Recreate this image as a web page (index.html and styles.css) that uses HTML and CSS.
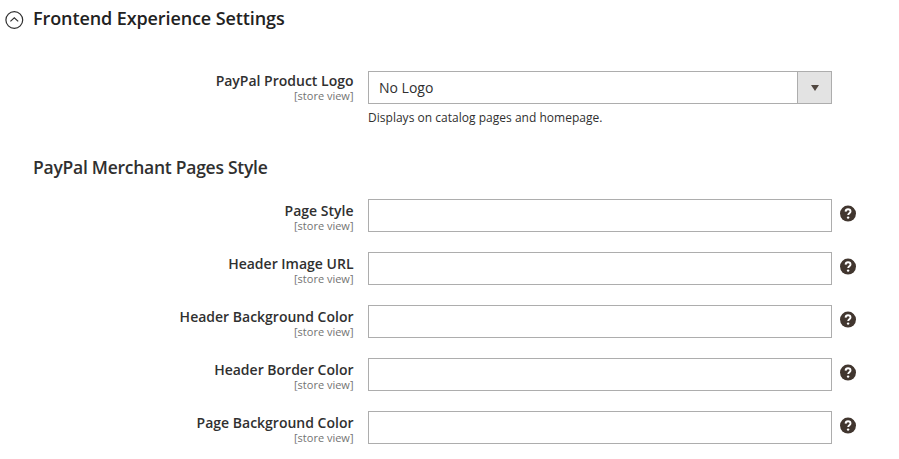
FILE: index.html
```html
<!DOCTYPE html>
<html lang="en"><head><meta charset="utf-8"><title>Frontend Experience Settings</title><link rel="stylesheet" href="styles.css"></head>
<body>
<svg width="0" height="0" class="defs"><symbol id="help" viewBox="0 0 16 16"><circle cx="8" cy="7.6" r="8" fill="#41362f"/><path d="M5.6 5.6C5.7 4 6.6 3.2 8 3.2s2.5.9 2.5 2.2c0 1.8-2.3 1.9-2.3 3.7" fill="none" stroke="#fff" stroke-width="1.9"/><circle cx="8.1" cy="11.6" r="1.2" fill="#fff"/></symbol></svg>
<main class="settings">
<header class="section-head"><svg class="toggle" viewBox="0 0 19 18"><circle cx="9.3" cy="9" r="8.4"/><path d="M5.4 10.4 9.3 6.9l3.9 3.5"/></svg><h1>Frontend Experience Settings</h1></header>
<div class="field logo"><div class="label"><label>PayPal Product Logo</label><span>[store view]</span></div><div class="control"><div class="select"><span>No Logo</span><i></i></div><p>Displays on catalog pages and homepage.</p></div></div>
<h2>PayPal Merchant Pages Style</h2>
<div class="fields">
<div class="field"><div class="label"><label>Page Style</label><span>[store view]</span></div><input><svg class="help"><use href="#help"/></svg></div>
<div class="field"><div class="label"><label>Header Image URL</label><span>[store view]</span></div><input><svg class="help"><use href="#help"/></svg></div>
<div class="field"><div class="label"><label>Header Background Color</label><span>[store view]</span></div><input><svg class="help"><use href="#help"/></svg></div>
<div class="field"><div class="label"><label>Header Border Color</label><span>[store view]</span></div><input><svg class="help"><use href="#help"/></svg></div>
<div class="field"><div class="label"><label>Page Background Color</label><span>[store view]</span></div><input><svg class="help"><use href="#help"/></svg></div>
</div>
</main></body></html>
```
FILE: styles.css
```css
* { box-sizing: border-box; }
body { margin: 0; background: #fff; color: #303030; font-family: "Open Sans", sans-serif; overflow: hidden; }
.defs { display: block; }
.settings { height: 459px; }
.section-head { display: flex; height: 38px; padding-left: 5px; }
.toggle { width: 19px; height: 18px; margin: 11px 9px 0 0; fill: none; stroke: #303030; stroke-width: 1.2; overflow: visible; }
h1, h2 { margin: 0; font-size: 18px; font-weight: 600; line-height: 37px; white-space: nowrap; }
h1 { letter-spacing: -.1px; color: #222; }
.field { display: flex; align-items: flex-start; height: 33px; }
.logo { margin-top: 33px; height: 76px; }
.label { width: 353.5px; margin-right: 14.5px; text-align: right; padding-top: 3px; }
.logo .label { padding-top: 1px; }
.label label { display: block; font-size: 14px; font-weight: 600; line-height: 18px; }
.label span { display: block; font-size: 11px; line-height: 12px; color: #737373; }
.select { display: flex; width: 464px; height: 33px; border: 1px solid #adadad; font-size: 14px; line-height: 32px; padding-left: 10px; justify-content: space-between; }
.select i { width: 34px; background: #e3e3e3; border-left: 1px solid #adadad; display: flex; align-items: center; justify-content: center; }
.select i::after { content: ""; border: 4px solid transparent; border-top: 6px solid #514740; border-bottom: 0; }
p { margin: 5px 0 0; font-size: 12px; line-height: 17px; letter-spacing: .02px; }
h2 { padding-left: 33px; font-size: 17.5px; line-height: 41px; height: 40px; letter-spacing: -.26px; }
.fields { display: flex; flex-direction: column; gap: 20px; margin-top: 12px; }
input { width: 464px; height: 33px; border: 1px solid #adadad; padding: 0 10px; border-radius: 0; font: inherit; font-size: 14px; }
.help { width: 16px; height: 16px; margin: 7px 0 0 8px; overflow: visible; }
#help { overflow: visible; }
```
